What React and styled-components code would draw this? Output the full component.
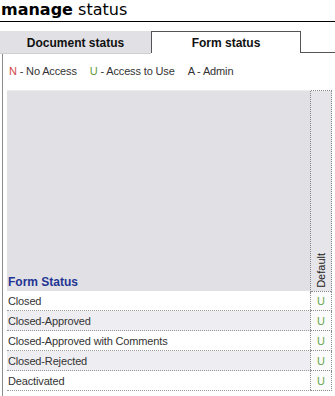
import React from "react";
import styled, { createGlobalStyle } from "styled-components";

const Global = createGlobalStyle`
  html, body { margin: 0; padding: 0; background: #fff; }
  body { font-family: "Liberation Sans", Arial, sans-serif; }
`;

const Page = styled.div`
  width: 335px;
`;

const Title = styled.h1`
  margin: 0;
  padding: 0 0 1px 1px;
  height: 20px;
  line-height: 20px;
  font-family: "DejaVu Sans", Verdana, sans-serif;
  font-size: 16px;
  font-weight: normal;
  color: #000;
  border-bottom: 1px solid #000;
  b { font-weight: bold; }
`;

const Tabs = styled.div`
  display: flex;
  margin-top: 9px;
  height: 22px;
`;

const Tab = styled.div`
  width: ${(p) => (p.$active ? "148px" : "151px")};
  box-sizing: content-box;
  display: flex;
  align-items: center;
  justify-content: center;
  font-size: 12px;
  font-weight: bold;
  color: #111;
  background: ${(p) => (p.$active ? "#fff" : "#e1e0e4")};
  border: ${(p) => (p.$active ? "1px solid #555" : "none")};
  border-bottom: ${(p) => (p.$active ? "none" : "1px solid #cfcfd2")};
  height: 21px;
  padding-top: ${(p) => (p.$active ? "0" : "1px")};
`;

const TabFill = styled.div`
  flex: 1;
  border-bottom: 1px solid #555;
`;

const Content = styled.div`
  margin-left: 2px;
  border-left: 1px solid #8c8c8c;
  padding: 11px 3px 6px 0;
`;

const Legend = styled.div`
  display: flex;
  gap: 13px;
  padding-left: 6px;
  font-size: 11px;
  line-height: 14px;
  letter-spacing: -0.15px;
  color: #333;
`;

const Key = styled.span`
  color: ${(p) => p.$color};
`;

const Table = styled.table`
  margin: 12px 0 0 4px;
  width: 325px;
  border-collapse: collapse;
  font-size: 11px;
  color: #333;
`;

const HeadName = styled.th`
  height: 198px;
  padding: 0 0 2px 1px;
  vertical-align: bottom;
  text-align: left;
  background: #e1e0e4;
  border-top: 1px solid #ececef;
  font-size: 12px;
  font-weight: bold;
  color: #1f3593;
`;

const HeadDefault = styled.th`
  width: 20px;
  padding: 0 0 1px 0;
  vertical-align: bottom;
  background: #e6e5e9;
  border: 1px dotted #8a8a8a;
  border-bottom: none;
  font-weight: normal;
  font-size: 11px;
  color: #222;
`;

const Rotated = styled.span`
  display: inline-block;
  writing-mode: vertical-rl;
  transform: rotate(180deg);
  line-height: 20px;
`;

const Row = styled.tr`
  background: ${(p) => (p.$alt ? "#eeedf1" : "#fff")};
`;

const NameCell = styled.td`
  height: 19px;
  padding: 0 0 0 1px;
  border-bottom: 1px dotted #9a9a9a;
  white-space: nowrap;
  letter-spacing: -0.15px;
`;

const DefCell = styled.td`
  text-align: center;
  background: #fbfbfb;
  color: #6aa84f;
  border: 1px dotted #8a8a8a;
  padding: 0;
`;

const statuses = [
  "Closed",
  "Closed-Approved",
  "Closed-Approved with Comments",
  "Closed-Rejected",
  "Deactivated",
];

export default function App() {
  return (
    <Page>
      <Global />
      <Title>
        <b>manage</b> status
      </Title>
      <Tabs>
        <Tab>Document status</Tab>
        <Tab $active>Form status</Tab>
        <TabFill />
      </Tabs>
      <Content>
        <Legend>
          <span>
            <Key $color="#d2474a">N</Key> - No Access
          </span>
          <span>
            <Key $color="#5f9a3c">U</Key> - Access to Use
          </span>
          <span>A - Admin</span>
        </Legend>
        <Table>
          <thead>
            <tr>
              <HeadName>Form Status</HeadName>
              <HeadDefault>
                <Rotated>Default</Rotated>
              </HeadDefault>
            </tr>
          </thead>
          <tbody>
            {statuses.map((s, i) => (
              <Row key={s} $alt={i % 2 === 1}>
                <NameCell>{s}</NameCell>
                <DefCell>U</DefCell>
              </Row>
            ))}
          </tbody>
        </Table>
      </Content>
    </Page>
  );
}
